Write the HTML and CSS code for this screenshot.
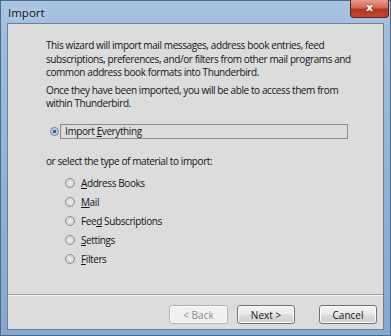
FILE: index.html
```html
<!DOCTYPE html>
<html>
<head>
<meta charset="utf-8">
<link rel="stylesheet" href="styles.css">
</head>
<body>
<div class="window">
  <div class="titlebar">
    <span class="title">Import</span>
    <div class="close"><span>x</span></div>
  </div>
  <div class="client">
    <div class="content">
      <p class="intro">This wizard will import mail messages, address book entries, feed subscriptions, preferences, and/or filters from other mail programs and common address book formats into Thunderbird.</p>
      <p class="intro">Once they have been imported, you will be able to access them from within Thunderbird.</p>
      <div class="everything">
        <span class="radio checked"></span>
        <span class="focusbox">Import <u>E</u>verything</span>
      </div>
      <p class="select">or select the type of material to import:</p>
      <ul class="options">
        <li><span class="radio"></span><span><u>A</u>ddress Books</span></li>
        <li><span class="radio"></span><span><u>M</u>ail</span></li>
        <li><span class="radio"></span><span>Fee<u>d</u> Subscriptions</span></li>
        <li><span class="radio"></span><span><u>S</u>ettings</span></li>
        <li><span class="radio"></span><span><u>F</u>ilters</span></li>
      </ul>
    </div>
    <div class="footer">
      <button class="btn back disabled">&lt; Back</button>
      <button class="btn next">Next &gt;</button>
      <button class="btn cancel">Cancel</button>
    </div>
  </div>
</div>
</body>
</html>
```

FILE: styles.css
```css
html, body {
  margin: 0;
  padding: 0;
}
body {
  width: 391px;
  height: 336px;
  overflow: hidden;
  font-family: "Open Sans", "Noto Sans", sans-serif;
  font-size: 10px;
  letter-spacing: -0.4px;
  color: #141414;
}
.window {
  box-sizing: border-box;
  height: 336px;
  display: flex;
  flex-direction: column;
  padding: 0 6px 5px 6px;
  background: linear-gradient(180deg, #a9c3e0 0%, #9ebde0 10%, #8fb0d6 60%, #86a8cf 100%);
  border: 1px solid #4f6a8a;
}
.titlebar {
  position: relative;
  height: 22px;
  flex: none;
  display: flex;
  align-items: center;
}
.title {
  font-size: 11.5px;
  letter-spacing: 0;
  color: #101010;
  padding-left: 1px;
  margin-top: 1px;
  text-shadow: 0 0 6px #e8f0f8;
}
.close {
  position: absolute;
  right: -5px;
  top: -1px;
  width: 39px;
  height: 18px;
  border: 1px solid #5a1f1a;
  border-top: none;
  border-radius: 0 0 4px 4px;
  background: linear-gradient(180deg, #e59b8c 0%, #d16b56 45%, #b8321c 55%, #c4472e 100%);
  display: flex;
  align-items: center;
  justify-content: center;
  box-sizing: border-box;
}
.close span {
  color: #fff;
  font-family: "DejaVu Sans", sans-serif;
  font-weight: bold;
  font-size: 11px;
  letter-spacing: 0;
  line-height: 1;
  margin-top: -2px;
  text-shadow: 0 0 2px #5a1f1a;
}
.client {
  flex: 1;
  display: flex;
  flex-direction: column;
  background: #dcdcdc;
  border: 1px solid #6f7f90;
}
.content {
  flex: 1;
  padding: 15px 18px 0 38px;
}
.intro {
  margin: 0 0 4px 0;
  line-height: 13.5px;
}
.everything {
  display: flex;
  align-items: center;
  margin-top: 13px;
  margin-left: 4px;
}
.focusbox {
  flex: 1;
  margin-right: 17px;
  border: 1px solid #8c8c8c;
  height: 13px;
  line-height: 13px;
  padding-left: 4px;
}
.radio {
  flex: none;
  width: 9px;
  height: 9px;
  border-radius: 50%;
  border: 1px solid #8d8d8d;
  background: radial-gradient(circle at 50% 50%, #f0f0f0 0%, #c9c9c9 100%);
  box-sizing: border-box;
  margin-right: 1px;
}
.radio.checked {
  border-color: #6e7a86;
  background: radial-gradient(circle at 50% 50%, #2a4f7f 0%, #2f6db0 30%, #aecbe8 40%, #dfe7ef 100%);
}
.select {
  margin: 16px 0 0 0;
  line-height: 13px;
}
.options {
  list-style: none;
  margin: 6px 0 0 0;
  padding: 0 0 0 19px;
}
.options li {
  display: flex;
  align-items: center;
  height: 19px;
}
.options .radio {
  width: 10px;
  height: 10px;
  margin-right: 6px;
}
.footer {
  flex: none;
  height: 35px;
  box-sizing: border-box;
  border-top: 1px solid #a3a3a3;
  box-shadow: inset 0 1px 0 #f2f2f2;
  display: flex;
  align-items: flex-start;
  padding: 10px 6px 0 161px;
}
.btn {
  width: 58px;
  height: 19px;
  padding: 0;
  font-family: "Open Sans", "Noto Sans", sans-serif;
  font-size: 10px;
  color: #141414;
  border: 1px solid #727272;
  border-radius: 3px;
  background: linear-gradient(180deg, #f3f3f3 0%, #ebebeb 48%, #dddddd 52%, #cfcfcf 100%);
  box-shadow: inset 0 0 0 1px #fbfbfb;
}
.btn.back {
  width: 59px;
  margin-right: 9px;
}
.btn.disabled {
  color: #8d8d8d;
  border-color: #adb2b5;
  background: #f0f0f0;
}
.btn.cancel {
  margin-left: 24px;
}
```
